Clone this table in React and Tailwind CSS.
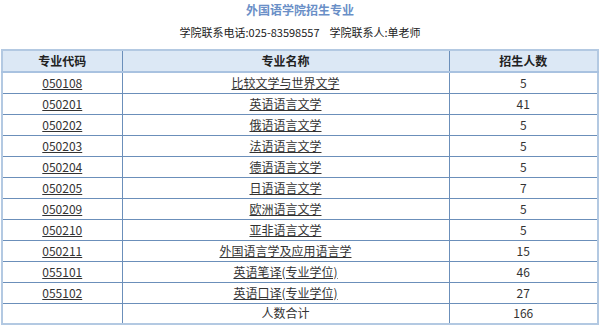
const rows = [
  { code: '050108', name: '比较文学与世界文学', num: 5 },
  { code: '050201', name: '英语语言文学', num: 41 },
  { code: '050202', name: '俄语语言文学', num: 5 },
  { code: '050203', name: '法语语言文学', num: 5 },
  { code: '050204', name: '德语语言文学', num: 5 },
  { code: '050205', name: '日语语言文学', num: 7 },
  { code: '050209', name: '欧洲语言文学', num: 5 },
  { code: '050210', name: '亚非语言文学', num: 5 },
  { code: '050211', name: '外国语言学及应用语言学', num: 15 },
  { code: '055101', name: '英语笔译(专业学位)', num: 46 },
  { code: '055102', name: '英语口译(专业学位)', num: 27 },
]

const font = { fontFamily: '"Microsoft YaHei", "Noto Sans CJK SC", "Noto Sans", sans-serif' }

export default function App() {
  return (
    <div className="w-[600px] h-[328px] bg-white text-[12px] text-[#333] overflow-hidden" style={font}>
      <div className="h-[20px] pt-[2px] text-center font-bold text-[#6a8fc7] leading-[16px]">外国语学院招生专业</div>
      <div className="h-[29px] pt-[4px] text-center text-[11px] leading-[16px] text-[#222]">
        学院联系电话:025-83598557&nbsp;&nbsp;&nbsp;&nbsp;学院联系人:单老师
      </div>
      <table className="ml-[1px] w-[598px] border-collapse border-2 border-[#b3c9e2]">
        <thead>
          <tr className="h-[22px] bg-[#dce8f5] border-b-2 border-b-[#a9c2e0]">
            <th className="w-[120px] p-0 font-bold text-[#222] border-r border-r-[#6b8fba]">专业代码</th>
            <th className="w-[327px] p-0 font-bold text-[#222] border-r border-r-[#6b8fba]">专业名称</th>
            <th className="p-0 font-bold text-[#222]">招生人数</th>
          </tr>
        </thead>
        <tbody>
          {rows.map(r => (
            <tr key={r.code} className="h-[21px] border-b border-b-[#6b8fba]">
              <td className="p-0 text-center border-r border-r-[#6b8fba]">
                <a href="#" className="underline text-[#333]">{r.code}</a>
              </td>
              <td className="p-0 text-center border-r border-r-[#6b8fba]">
                <a href="#" className="underline text-[#333]">{r.name}</a>
              </td>
              <td className="p-0 text-center">{r.num}</td>
            </tr>
          ))}
          <tr className="h-[21px]">
            <td className="p-0 border-r border-r-[#6b8fba]"></td>
            <td className="p-0 text-center border-r border-r-[#6b8fba]">人数合计</td>
            <td className="p-0 text-center">166</td>
          </tr>
        </tbody>
      </table>
    </div>
  )
}
